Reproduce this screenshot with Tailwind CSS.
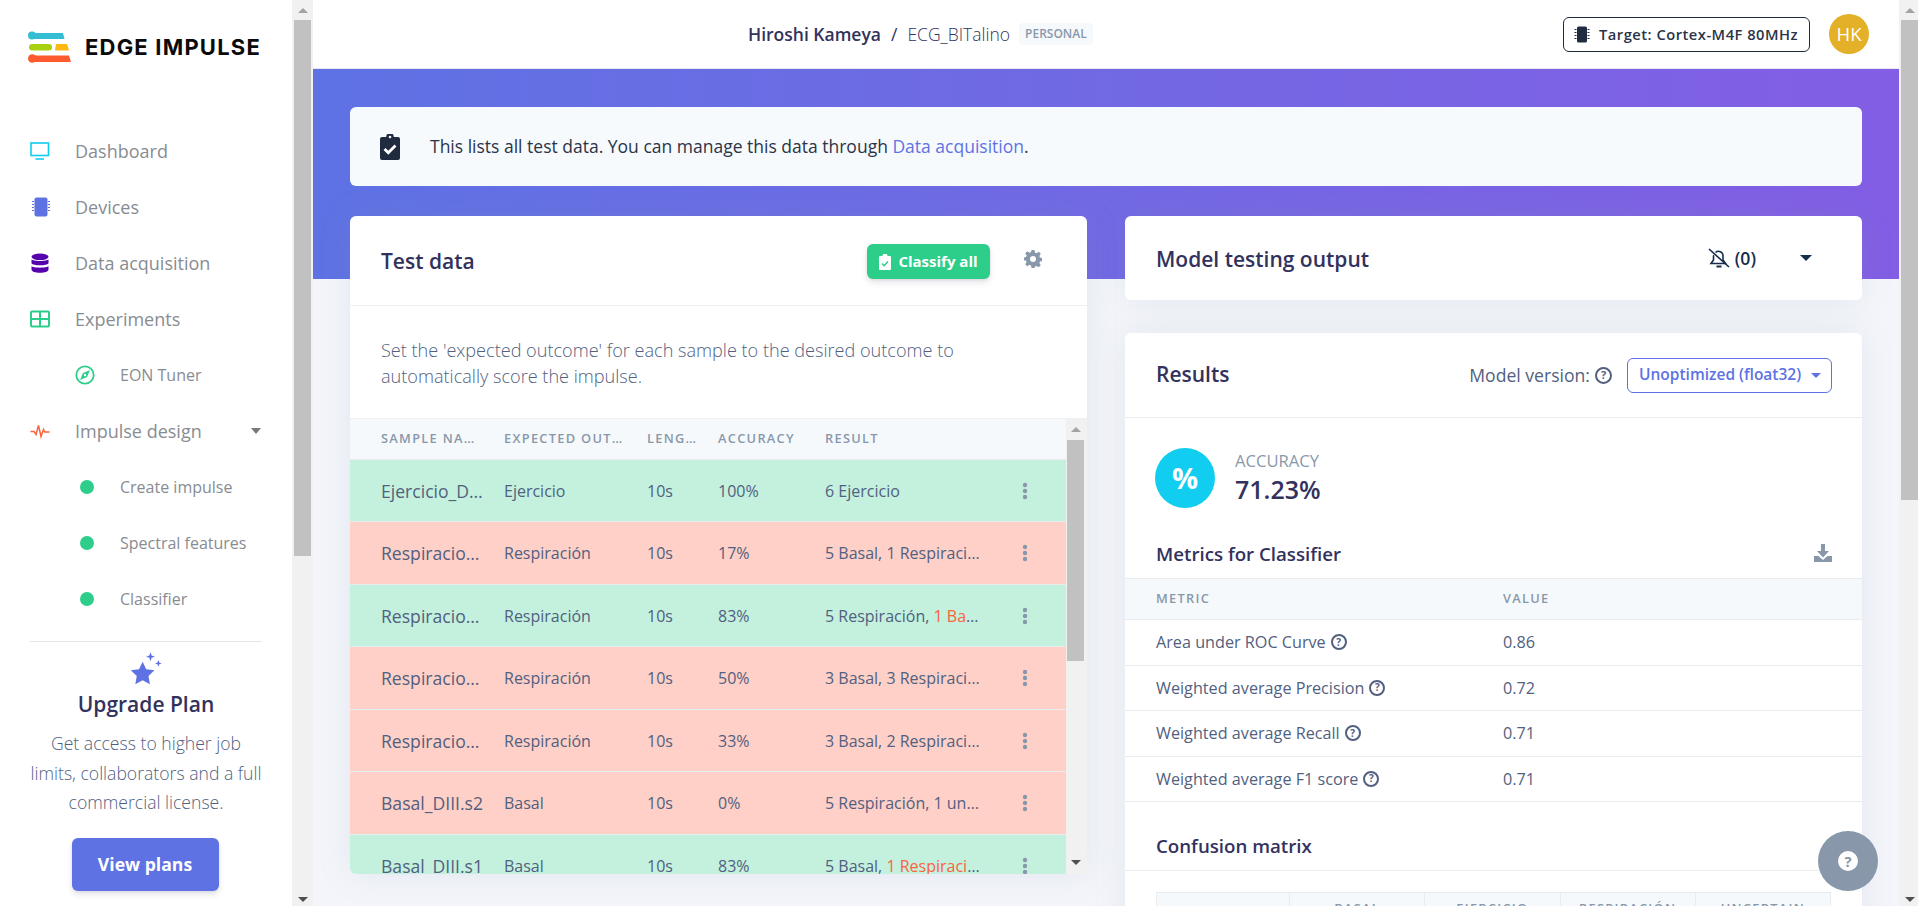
<!DOCTYPE html>
<html lang="en">
<head>
  <meta charset="UTF-8" />
  <meta name="viewport" content="width=device-width, initial-scale=1.0" />
  <title>Model testing - Edge Impulse</title>
  <script src="https://cdn.jsdelivr.net/npm/@tailwindcss/browser@4"></script>
</head>
<body class="h-screen overflow-hidden flex bg-white font-['Open_Sans',sans-serif] text-[#525f7f]">

  <!-- Sidebar -->
  <aside class="w-[292px] shrink-0 h-full bg-white flex flex-col">
    <div class="h-[48px] mt-[23px] pl-[28px] flex items-center gap-[13px]">
      <svg width="44" height="32" viewBox="0 0 44 32">
        <path d="M4 2h31l1.500 6H4z" fill="#35bdd3"/><circle cx="4" cy="4.500" r="4" fill="#35bdd3"/>
        <rect x="1" y="13" width="23" height="6.500" rx="3.200" fill="#a8d10f"/>
        <path d="M28 13h11l2 6.500H27z" fill="#fdb913"/>
        <path d="M4 24.500h37l2 6.500H4z" fill="#fd5a30"/><circle cx="4.300" cy="27.500" r="4.300" fill="#fd5a30"/>
      </svg>
      <span class="font-['Inter',sans-serif] font-bold text-[22px] leading-none tracking-[1.200px] text-[#0b0b0b]">EDGE IMPULSE</span>
    </div>

    <nav class="mt-[52px] flex flex-col text-[#888c92]">
      <a class="h-[56px] flex items-center pl-[30px] text-[18px]">
        <svg class="w-[20px] h-[20px] mr-[25px]" viewBox="0 0 20 20" fill="none" stroke="#11cdef" stroke-width="1.600"><rect x="1" y="2" width="17.500" height="12.500"/><path d="M5.500 18h8.500"/></svg>
        Dashboard
      </a>
      <a class="h-[56px] flex items-center pl-[30px] text-[18px]">
        <svg class="w-[20px] h-[20px] mr-[25px]" viewBox="0 0 20 20" fill="#5e72e4"><rect x="4.500" y="0.500" width="13" height="19" rx="2"/><path d="M2 4h2v1H2zM2 7h2v1H2zM2 10h2v1H2zM2 13h2v1H2zM18 4h2v1h-2zM18 7h2v1h-2zM18 10h2v1h-2zM18 13h2v1h-2z"/></svg>
        Devices
      </a>
      <a class="h-[56px] flex items-center pl-[30px] text-[18px]">
        <svg class="w-[20px] h-[20px] mr-[25px]" viewBox="0 0 20 20" fill="#5603ad"><ellipse cx="10" cy="3.800" rx="8.500" ry="3.300"/><path d="M1.500 6.300C3 8.500 17 8.500 18.500 6.300v4C17 13 3 13 1.500 10.300z"/><path d="M1.500 13C3 15.200 17 15.200 18.500 13v3.500c0 2-3.800 3.300-8.500 3.300s-8.500-1.300-8.500-3.300z"/></svg>
        Data acquisition
      </a>
      <a class="h-[56px] flex items-center pl-[30px] text-[18px]">
        <svg class="w-[20px] h-[20px] mr-[25px]" viewBox="0 0 20 20" fill="none" stroke="#2dce89" stroke-width="2"><rect x="1" y="2.500" width="18" height="15" rx="1"/><path d="M1 10h18M10 2.500v15"/></svg>
        Experiments
      </a>
      <a class="h-[56px] flex items-center pl-[75px] text-[16px]">
        <svg class="w-[20px] h-[20px] mr-[25px]" viewBox="0 0 20 20" fill="none"><circle cx="10" cy="10" r="8.700" stroke="#2dce89" stroke-width="1.800"/><path d="M15 5L12 12 5 15 8 8z" fill="#2dce89"/><circle cx="10" cy="10" r="1.200" fill="#fff"/></svg>
        EON Tuner
      </a>
      <a class="h-[56px] flex items-center pl-[30px] text-[18px]">
        <svg class="w-[20px] h-[20px] mr-[25px]" viewBox="0 0 20 20" fill="none" stroke="#fb6340" stroke-width="1.500"><path d="M0.500 10.500h3.500l2 3 2.500-9 2.500 11 2.500-7 1.200 2.500h4.800"/></svg>
        Impulse design
        <span class="ml-auto mr-[31px] w-0 h-0 border-x-[5.500px] border-x-transparent border-t-[6px] border-t-[#77787c]"></span>
      </a>
      <a class="h-[56px] flex items-center pl-[80px] text-[16px]">
        <span class="w-[14px] h-[14px] rounded-full bg-[#2dce89] mr-[26px]"></span>
        Create impulse
      </a>
      <a class="h-[56px] flex items-center pl-[80px] text-[16px]">
        <span class="w-[14px] h-[14px] rounded-full bg-[#2dce89] mr-[26px]"></span>
        Spectral features
      </a>
      <a class="h-[56px] flex items-center pl-[80px] text-[16px]">
        <span class="w-[14px] h-[14px] rounded-full bg-[#2dce89] mr-[26px]"></span>
        Classifier
      </a>
    </nav>

    <div class="mx-[30px] mt-[14px] border-t border-[#e3e5e8] flex flex-col items-center">
      <svg class="mt-[9px]" width="36" height="36" viewBox="0 0 32 32" fill="#5e72e4">
        <path d="M13 9.500l3.200 6.700 7.300 1-5.300 5 1.300 7.300L13 26l-6.500 3.500 1.300-7.300-5.300-5 7.300-1z"/>
        <path d="M20 1l1 3 3 1-3 1-1 3-1-3-3-1 3-1z"/>
        <path d="M27 8l.800 2.300 2.200.700-2.200.800L27 14l-.800-2.200L24 11l2.200-.700z"/>
      </svg>
      <h3 class="mt-[2px] text-[21px] leading-[30px] font-semibold text-[#32325d]">Upgrade Plan</h3>
      <p class="mt-[10px] text-center text-[17.600px] leading-[29.700px] font-light text-[#525f7f] whitespace-nowrap">Get access to higher job<br />limits, collaborators and a full<br />commercial license.</p>
      <button class="mt-[20px] mr-[2px] w-[147px] h-[53px] rounded-[6px] bg-[#5e72e4] text-white font-bold text-[17.600px] shadow-[0_4px_6px_rgba(50,50,93,0.11),0_1px_3px_rgba(0,0,0,0.08)]">View plans</button>
    </div>
  </aside>

  <!-- Sidebar scrollbar -->
  <div class="w-[21px] shrink-0 h-full bg-[#f1f1f1] flex flex-col pl-[2px] pr-[2px]">
    <div class="h-[20px] flex items-center justify-center"><span class="w-0 h-0 border-x-[5px] border-x-transparent border-b-[5px] border-b-[#a3a3a3]"></span></div>
    <div class="h-[536px] bg-[#c1c1c1]"></div>
    <div class="flex-1"></div>
    <div class="h-[14px] flex items-center justify-center"><span class="w-0 h-0 border-x-[5px] border-x-transparent border-t-[5px] border-t-[#505050]"></span></div>
  </div>

  <!-- Main -->
  <div class="flex-1 min-w-0 h-full flex flex-col bg-[#f3f5fa] relative">
    <header class="h-[69px] shrink-0 bg-white border-b border-[#e6e8ee] flex items-center pr-[30px] pl-[435px]">
      <span class="font-semibold text-[17.500px] text-[#32325d]">Hiroshi Kameya</span>
      <span class="mx-[10px] text-[17.500px] text-[#32325d]">/</span>
      <span class="text-[17.500px] font-light text-[#32325d]">ECG_BITalino</span>
      <span class="ml-[9px] px-[6px] h-[22px] flex items-center rounded-[4px] bg-[#f6f9fc] text-[#8898aa] text-[12px] font-semibold uppercase">Personal</span>
      <button class="ml-auto h-[35px] w-[247px] rounded-[6px] border border-[#212b3f] flex items-center pl-[10px] text-[14.700px] font-semibold tracking-[0.5px] text-[#2b3447] whitespace-nowrap">
        <svg class="mr-[9px]" width="16" height="17" viewBox="0 0 16 17" fill="#212b3f"><rect x="3" y="0.500" width="10" height="16" rx="1.500"/><path d="M0.500 3h2v1h-2zM0.500 6h2v1h-2zM0.500 9h2v1h-2zM0.500 12h2v1h-2zM13.500 3h2v1h-2zM13.500 6h2v1h-2zM13.500 9h2v1h-2zM13.500 12h2v1h-2z"/></svg>
        Target: Cortex-M4F 80MHz
      </button>
      <span class="ml-[19px] w-[40px] h-[40px] rounded-full bg-[#e4b028] text-white text-[18.500px] flex items-center justify-center">HK</span>
    </header>

    <div class="flex-1 min-h-0 overflow-hidden">
      <div class="h-[210px] bg-gradient-to-r from-[#5e72e4] to-[#825ee4]"></div>

      <div class="relative -mt-[210px] px-[37px] pt-[38px]">
        <!-- Info banner -->
        <div class="h-[79px] rounded-[6px] bg-[#f7fafc] flex items-center pl-[30px] text-[17.500px] text-[#2b3447]">
          <svg class="mr-[30px]" width="20" height="26" viewBox="0 0 20 26"><path d="M2 3h4.200a3.800 3.800 0 0 1 7.600 0H18a2 2 0 0 1 2 2v19a2 2 0 0 1-2 2H2a2 2 0 0 1-2-2V5a2 2 0 0 1 2-2z" fill="#212b3f"/><circle cx="10" cy="3" r="1.300" fill="#f7fafc"/><path d="M4.500 15l3.800 3.800 7.200-7.300" fill="none" stroke="#fff" stroke-width="2.800"/></svg>
          <p>This lists all test data. You can manage this data through <a class="text-[#5e72e4]">Data acquisition</a>.</p>
        </div>

        <div class="mt-[30px] grid grid-cols-2 gap-[38px] items-start">
          <!-- Test data card -->
          <section class="h-[658px] rounded-[6px] bg-white overflow-hidden flex flex-col shadow-[0_0_32px_rgba(136,152,170,0.15)]">
            <div class="h-[90px] shrink-0 border-b border-[#eef0f4] flex items-center pl-[31px] pt-[2px]">
              <h3 class="text-[21px] font-semibold text-[#32325d]">Test data</h3>
              <button class="ml-auto w-[123px] h-[35px] rounded-[6px] bg-[#2dce89] text-white text-[15px] font-bold flex items-center justify-center gap-[7px] shadow-[0_4px_6px_rgba(50,50,93,0.11),0_1px_3px_rgba(0,0,0,0.08)]">
                <svg width="12" height="16" viewBox="0 0 12 16"><path d="M1 2h2.500a2.500 2.500 0 0 1 5 0H11a1 1 0 0 1 1 1v12a1 1 0 0 1-1 1H1a1 1 0 0 1-1-1V3a1 1 0 0 1 1-1z" fill="#fff"/><path d="M3 9.500l2.200 2.200L9 7.500" fill="none" stroke="#2dce89" stroke-width="1.500"/></svg>
                Classify all
              </button>
              <svg class="ml-[34px] mr-[45px] mb-[5px]" width="18" height="18" viewBox="0 0 24 24" fill="#8898aa"><path fill-rule="evenodd" d="M10 0h4l.7 3.400 2 .8 2.900-1.900 2.800 2.800-1.900 2.900.8 2 3.400.7v4l-3.400.7-.8 2 1.900 2.900-2.800 2.800-2.900-1.900-2 .8L14 24h-4l-.7-3.400-2-.8-2.900 1.900-2.800-2.800 1.900-2.900-.8-2L-.7 14v-4l3.400-.7.8-2-1.900-2.900 2.800-2.800 2.900 1.900 2-.8zM12 8a4 4 0 1 0 0 8 4 4 0 0 0 0-8z"/></svg>
            </div>
            <p class="h-[112px] shrink-0 pt-[31px] px-[31px] text-[18.100px] leading-[26px] font-light text-[#525f7f]">Set the 'expected outcome' for each sample to the desired outcome to automatically score the impulse.</p>

            <div class="flex-1 min-h-0 flex border-t border-[#eef0f4]">
              <div class="flex-1 min-w-0 overflow-hidden">
                <table class="w-full table-fixed text-[16px]">
                  <colgroup>
                    <col class="w-[144px]" /><col class="w-[143px]" /><col class="w-[71px]" /><col class="w-[107px]" /><col class="w-[175px]" /><col />
                  </colgroup>
                  <thead class="bg-[#f6f9fc] text-[#8898aa] text-[12.800px] font-semibold uppercase tracking-[1.300px] text-left">
                    <tr class="h-[40px]">
                      <th class="pl-[31px] pr-[16px] font-semibold truncate">Sample name</th>
                      <th class="px-[10px] font-semibold truncate">Expected outcome</th>
                      <th class="px-[10px] font-semibold truncate">Length</th>
                      <th class="px-[10px] font-semibold truncate">Accuracy</th>
                      <th class="px-[10px] font-semibold truncate">Result</th>
                      <th></th>
                    </tr>
                  </thead>
                  <tbody class="[&_td]:pt-[1px]">
                    <tr class="h-[62.500px] bg-[#c3f1de] border-t border-[#e9ecef]">
                      <td class="pl-[31px] pr-[10px] truncate text-[17.600px]">Ejercicio_DIII.s1</td><td class="px-[10px] truncate">Ejercicio</td><td class="px-[10px]">10s</td><td class="px-[10px]">100%</td><td class="px-[10px] truncate">6 Ejercicio</td>
                      <td class="pl-[32px]"><svg width="6" height="18" viewBox="0 0 6 18" fill="#8898aa"><circle cx="3" cy="3" r="2.200"/><circle cx="3" cy="9" r="2.200"/><circle cx="3" cy="15" r="2.200"/></svg></td>
                    </tr>
                    <tr class="h-[62.500px] bg-[#ffd0c7] border-t border-[#e9ecef]">
                      <td class="pl-[31px] pr-[10px] truncate text-[17.600px]">Respiracion_DIII.s5</td><td class="px-[10px] truncate">Respiración</td><td class="px-[10px]">10s</td><td class="px-[10px]">17%</td><td class="px-[10px] truncate">5 Basal, 1 Respiración</td>
                      <td class="pl-[32px]"><svg width="6" height="18" viewBox="0 0 6 18" fill="#8898aa"><circle cx="3" cy="3" r="2.200"/><circle cx="3" cy="9" r="2.200"/><circle cx="3" cy="15" r="2.200"/></svg></td>
                    </tr>
                    <tr class="h-[62.500px] bg-[#c3f1de] border-t border-[#e9ecef]">
                      <td class="pl-[31px] pr-[10px] truncate text-[17.600px]">Respiracion_DIII.s4</td><td class="px-[10px] truncate">Respiración</td><td class="px-[10px]">10s</td><td class="px-[10px]">83%</td><td class="px-[10px] truncate">5 Respiración, <span class="text-[#fb6340]">1 Basal</span></td>
                      <td class="pl-[32px]"><svg width="6" height="18" viewBox="0 0 6 18" fill="#8898aa"><circle cx="3" cy="3" r="2.200"/><circle cx="3" cy="9" r="2.200"/><circle cx="3" cy="15" r="2.200"/></svg></td>
                    </tr>
                    <tr class="h-[62.500px] bg-[#ffd0c7] border-t border-[#e9ecef]">
                      <td class="pl-[31px] pr-[10px] truncate text-[17.600px]">Respiracion_DIII.s3</td><td class="px-[10px] truncate">Respiración</td><td class="px-[10px]">10s</td><td class="px-[10px]">50%</td><td class="px-[10px] truncate">3 Basal, 3 Respiración</td>
                      <td class="pl-[32px]"><svg width="6" height="18" viewBox="0 0 6 18" fill="#8898aa"><circle cx="3" cy="3" r="2.200"/><circle cx="3" cy="9" r="2.200"/><circle cx="3" cy="15" r="2.200"/></svg></td>
                    </tr>
                    <tr class="h-[62.500px] bg-[#ffd0c7] border-t border-[#e9ecef]">
                      <td class="pl-[31px] pr-[10px] truncate text-[17.600px]">Respiracion_DIII.s2</td><td class="px-[10px] truncate">Respiración</td><td class="px-[10px]">10s</td><td class="px-[10px]">33%</td><td class="px-[10px] truncate">3 Basal, 2 Respiración</td>
                      <td class="pl-[32px]"><svg width="6" height="18" viewBox="0 0 6 18" fill="#8898aa"><circle cx="3" cy="3" r="2.200"/><circle cx="3" cy="9" r="2.200"/><circle cx="3" cy="15" r="2.200"/></svg></td>
                    </tr>
                    <tr class="h-[62.500px] bg-[#ffd0c7] border-t border-[#e9ecef]">
                      <td class="pl-[31px] pr-[10px] truncate text-[17.600px]">Basal_DIII.s2</td><td class="px-[10px] truncate">Basal</td><td class="px-[10px]">10s</td><td class="px-[10px]">0%</td><td class="px-[10px] truncate">5 Respiración, 1 uncertain</td>
                      <td class="pl-[32px]"><svg width="6" height="18" viewBox="0 0 6 18" fill="#8898aa"><circle cx="3" cy="3" r="2.200"/><circle cx="3" cy="9" r="2.200"/><circle cx="3" cy="15" r="2.200"/></svg></td>
                    </tr>
                    <tr class="h-[62.500px] bg-[#c3f1de] border-t border-[#e9ecef]">
                      <td class="pl-[31px] pr-[10px] truncate text-[17.600px]">Basal_DIII.s1</td><td class="px-[10px] truncate">Basal</td><td class="px-[10px]">10s</td><td class="px-[10px]">83%</td><td class="px-[10px] truncate">5 Basal, <span class="text-[#fb6340]">1 Respiración</span></td>
                      <td class="pl-[32px]"><svg width="6" height="18" viewBox="0 0 6 18" fill="#8898aa"><circle cx="3" cy="3" r="2.200"/><circle cx="3" cy="9" r="2.200"/><circle cx="3" cy="15" r="2.200"/></svg></td>
                    </tr>
                  </tbody>
                </table>
              </div>
              <!-- Table scrollbar -->
              <div class="w-[21px] shrink-0 bg-[#f1f1f1] flex flex-col pl-[1px] pr-[3px]">
                <div class="h-[21px] flex items-center justify-center"><span class="w-0 h-0 border-x-[5px] border-x-transparent border-b-[5px] border-b-[#a3a3a3]"></span></div>
                <div class="h-[221px] bg-[#c1c1c1]"></div>
                <div class="flex-1"></div>
                <div class="h-[24px] flex items-center justify-center"><span class="w-0 h-0 border-x-[5px] border-x-transparent border-t-[5px] border-t-[#505050]"></span></div>
              </div>
            </div>
          </section>

          <div class="flex flex-col gap-[33px]">
            <!-- Model testing output -->
            <section class="h-[84px] rounded-[6px] bg-white flex items-center pl-[31px] shadow-[0_0_32px_rgba(136,152,170,0.15)]">
              <h3 class="pt-[3px] text-[21px] font-semibold text-[#32325d]">Model testing output</h3>
              <svg class="ml-auto" width="22" height="20" viewBox="0 0 22 20" fill="none" stroke="#172b4d" stroke-width="1.600"><path d="M1 1l20 18"/><path d="M4 15.500h13.500l-2.500-3.500V8a4.500 4.500 0 0 0-7.500-3.500M5.800 7.200c-.2.300-.3.600-.3 1V12L3 15.500h2"/><path d="M8.500 18.500h5" stroke-width="2"/></svg>
              <span class="ml-[5px] text-[17.600px] font-semibold text-[#172b4d]">(0)</span>
              <span class="ml-[44px] mr-[50px] w-0 h-0 border-x-[6px] border-x-transparent border-t-[6px] border-t-[#172b4d]"></span>
            </section>

            <!-- Results -->
            <section class="rounded-[6px] bg-white flex flex-col shadow-[0_0_32px_rgba(136,152,170,0.15)]">
              <div class="h-[85px] border-b border-[#eaecf0] flex items-center pl-[31px] pr-[30px]">
                <h3 class="text-[21px] font-semibold text-[#32325d]">Results</h3>
                <span class="ml-auto text-[17.600px] text-[#525f7f]">Model version:</span>
                <span class="ml-[5px] w-[17px] h-[17px] rounded-full border-2 border-[#525f7f] text-[11px] font-bold flex items-center justify-center">?</span>
                <button class="ml-[15px] w-[205px] h-[35px] rounded-[6px] border border-[#5e72e4] text-[#5e72e4] text-[15.500px] font-semibold flex items-center pl-[11px] pr-[10px]">Unoptimized (float32)<span class="ml-auto w-0 h-0 border-x-[5px] border-x-transparent border-t-[5px] border-t-[#5e72e4]"></span></button>
              </div>

              <div class="pl-[30px] pt-[30px] flex items-center gap-[20px]">
                <div class="w-[60px] h-[60px] rounded-full bg-[#11cdef] text-white font-bold text-[29px] flex items-center justify-center">%</div>
                <div class="flex flex-col">
                  <span class="text-[16.600px] leading-[20px] font-medium uppercase text-[#8898aa]">Accuracy</span>
                  <span class="mt-[2px] text-[25px] leading-[33px] font-semibold text-[#32325d]">71.23%</span>
                </div>
              </div>

              <div class="mt-[28px] h-[42px] flex items-start justify-between pl-[31px] pr-[30px]">
                <h4 class="text-[18.700px] leading-[36px] font-semibold text-[#32325d]">Metrics for Classifier</h4>
                <svg class="mt-[8px]" width="18" height="18" viewBox="0 0 18 18" fill="#8898aa"><path d="M7 0h4v7h4l-6 6.500L3 7h4z"/><path d="M0 12h4.500L9 16l4.500-4H18v6H0z"/></svg>
              </div>

              <table class="w-full table-fixed text-[16.200px] text-left">
                <colgroup><col class="w-[378px]" /><col /></colgroup>
                <thead class="bg-[#f6f9fc] text-[#8898aa] text-[12.800px] uppercase tracking-[1.300px]">
                  <tr class="h-[41px] border-y border-[#e9ecef]"><th class="pl-[31px] font-semibold">Metric</th><th class="font-semibold">Value</th></tr>
                </thead>
                <tbody>
                  <tr class="h-[45.500px] border-b border-[#e9ecef]"><td class="pl-[31px]"><span class="flex items-center gap-[5px]">Area under ROC Curve <span class="w-[16px] h-[16px] rounded-full border-2 border-[#525f7f] text-[10px] font-bold flex items-center justify-center">?</span></span></td><td>0.86</td></tr>
                  <tr class="h-[45.500px] border-b border-[#e9ecef]"><td class="pl-[31px]"><span class="flex items-center gap-[5px]">Weighted average Precision <span class="w-[16px] h-[16px] rounded-full border-2 border-[#525f7f] text-[10px] font-bold flex items-center justify-center">?</span></span></td><td>0.72</td></tr>
                  <tr class="h-[45.500px] border-b border-[#e9ecef]"><td class="pl-[31px]"><span class="flex items-center gap-[5px]">Weighted average Recall <span class="w-[16px] h-[16px] rounded-full border-2 border-[#525f7f] text-[10px] font-bold flex items-center justify-center">?</span></span></td><td>0.71</td></tr>
                  <tr class="h-[45.500px] border-b border-[#e9ecef]"><td class="pl-[31px]"><span class="flex items-center gap-[5px]">Weighted average F1 score <span class="w-[16px] h-[16px] rounded-full border-2 border-[#525f7f] text-[10px] font-bold flex items-center justify-center">?</span></span></td><td>0.71</td></tr>
                </tbody>
              </table>

              <h3 class="h-[69px] border-b border-[#eaecf0] pl-[31px] pt-[29px] text-[18.700px] leading-[30px] font-semibold text-[#32325d]">Confusion matrix</h3>
              <div class="px-[31px] pt-[21px] pb-[30px]">
                <table class="w-full table-fixed border border-[#e9ecef] text-[12.800px] uppercase tracking-[1.300px] text-[#8898aa]">
                  <thead class="bg-[#f6f9fc]">
                    <tr class="h-[40px]"><th class="w-[133px] border-r border-[#e9ecef]"></th><th class="align-top pt-[6px] font-semibold border-r border-[#e9ecef]">Basal</th><th class="align-top pt-[6px] font-semibold border-r border-[#e9ecef]">Ejercicio</th><th class="align-top pt-[6px] font-semibold border-r border-[#e9ecef]">Respiración</th><th class="align-top pt-[6px] font-semibold">Uncertain</th></tr>
                  </thead>
                </table>
              </div>
            </section>
          </div>
        </div>
      </div>
    </div>

    <!-- Help button -->
    <button class="absolute right-[21px] bottom-[15px] w-[60px] h-[60px] rounded-full bg-[#8898aa] flex items-center justify-center">
      <span class="w-[20px] h-[20px] rounded-full bg-white text-[#8898aa] text-[15px] font-bold leading-none flex items-center justify-center">?</span>
    </button>
  </div>

  <!-- Page scrollbar -->
  <div class="w-[19px] shrink-0 h-full bg-[#f1f1f1] flex flex-col pl-[2px]">
    <div class="h-[20px] flex items-center justify-center"><span class="w-0 h-0 border-x-[5px] border-x-transparent border-b-[5px] border-b-[#a3a3a3]"></span></div>
    <div class="h-[480px] bg-[#c1c1c1]"></div>
    <div class="flex-1"></div>
    <div class="h-[14px] flex items-center justify-center"><span class="w-0 h-0 border-x-[5px] border-x-transparent border-t-[5px] border-t-[#505050]"></span></div>
  </div>
</body>
</html>
